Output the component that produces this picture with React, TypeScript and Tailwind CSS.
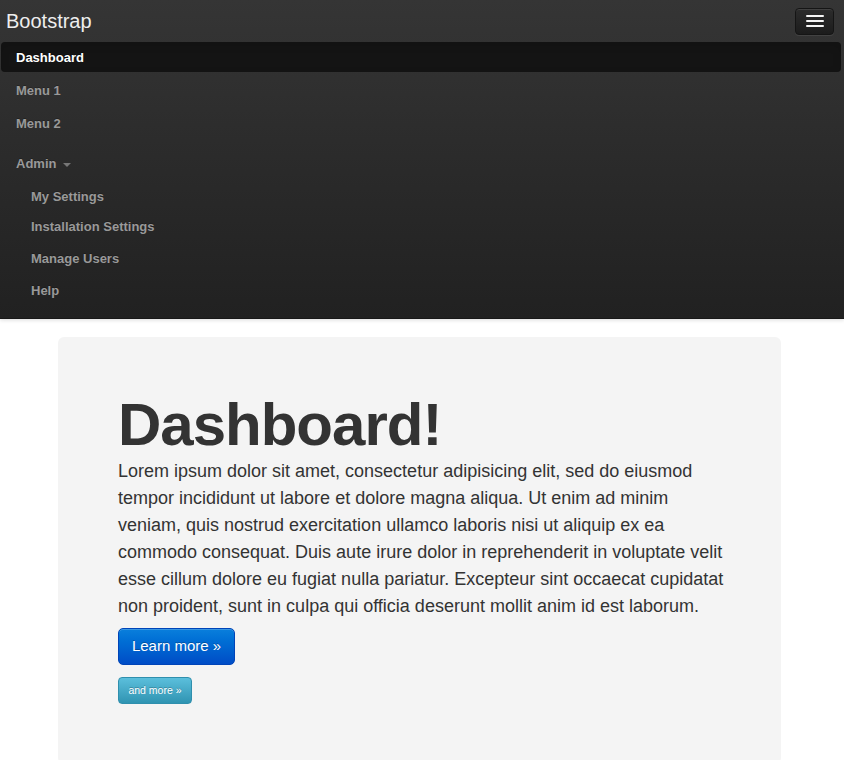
import React from "react";

const font = { fontFamily: '"Liberation Sans", Arial, sans-serif' };

function NavItem({ label, active, sub, className = "" }: { label: string; active?: boolean; sub?: boolean; className?: string }) {
  return (
    <div
      className={
        "h-[30px] flex items-center pt-[2px] text-[13px] font-bold [text-shadow:0_-1px_0_rgba(0,0,0,0.25)] " +
        (active
          ? "ml-[1px] mr-[3px] pl-[15px] rounded-[4px] bg-[#141414] text-white shadow-[inset_0_3px_8px_rgba(0,0,0,0.125)] "
          : sub
          ? "pl-[31px] text-[#999999] "
          : "pl-[16px] text-[#999999] ") +
        className
      }
    >
      {label}
    </div>
  );
}

export default function App() {
  return (
    <div className="min-h-[760px] bg-white" style={font}>
      <div className="bg-gradient-to-b from-[#353535] to-[#212121] border-b border-[#181818] shadow-[0_1px_4px_rgba(0,0,0,0.15)] pb-[13px]">
        <div className="h-[42px] flex items-center justify-between pl-[6px] pr-[10px]">
          <span className="text-[20px] text-[#eeeeee] leading-none">Bootstrap</span>
          <button className="w-[39px] h-[27px] rounded-[4px] bg-gradient-to-b from-[#2c2c2c] to-[#1c1c1c] border border-[#151515] shadow-[inset_0_1px_0_rgba(255,255,255,0.1),0_1px_0_rgba(255,255,255,0.075)] flex flex-col items-center justify-center gap-[3px]">
            <span className="block w-[18px] h-[2px] bg-[#f5f5f5] rounded-[1px]" />
            <span className="block w-[18px] h-[2px] bg-[#f5f5f5] rounded-[1px]" />
            <span className="block w-[18px] h-[2px] bg-[#f5f5f5] rounded-[1px]" />
          </button>
        </div>
        <NavItem label="Dashboard" active />
        <NavItem label="Menu 1" className="mt-[3px]" />
        <NavItem label="Menu 2" className="mt-[3px]" />
        <div className="mt-[10px] h-[30px] flex items-center pt-[2px] pl-[16px] text-[13px] font-bold text-[#999999] [text-shadow:0_-1px_0_rgba(0,0,0,0.25)]">
          Admin
          <span className="ml-[7px] mt-[1px] inline-block w-0 h-0 border-l-[4px] border-r-[4px] border-t-[4px] border-l-transparent border-r-transparent border-t-[#777777]" />
        </div>
        <NavItem label="My Settings" sub className="mt-[3px]" />
        <NavItem label="Installation Settings" sub />
        <NavItem label="Manage Users" sub className="mt-[2px]" />
        <NavItem label="Help" sub className="mt-[2px]" />
      </div>

      <div className="mt-[18px] ml-[58px] w-[723px] rounded-[6px] bg-[#f4f4f4] pt-[58px] pl-[60px] pr-[48px] pb-[60px] text-[#333333]">
        <h1 className="text-[60px] font-bold leading-none tracking-[-1px]">Dashboard!</h1>
        <p className="mt-[3px] text-[18px] leading-[27px]">
          Lorem ipsum dolor sit amet, consectetur adipisicing elit, sed do eiusmod tempor incididunt ut labore et dolore magna aliqua. Ut enim ad minim veniam, quis nostrud exercitation ullamco laboris nisi ut aliquip ex ea commodo consequat. Duis aute irure dolor in reprehenderit in voluptate velit esse cillum dolore eu fugiat nulla pariatur. Excepteur sint occaecat cupidatat non proident, sunt in culpa qui officia deserunt mollit anim id est laborum.
        </p>
        <div className="mt-[8px]">
          <button className="h-[37px] w-[117px] rounded-[5px] border border-[#0044b8] bg-gradient-to-b from-[#0a7fdc] to-[#004cc6] text-white text-[15px] [text-shadow:0_-1px_0_rgba(0,0,0,0.25)] shadow-[inset_0_1px_0_rgba(255,255,255,0.2)]">
            Learn more »
          </button>
        </div>
        <div className="mt-[12px]">
          <button className="h-[27px] w-[74px] rounded-[4px] border border-[#2f8fad] bg-gradient-to-b from-[#5bbfdc] to-[#2f94b2] text-white text-[10.5px] [text-shadow:0_-1px_0_rgba(0,0,0,0.25)]">
            and more »
          </button>
        </div>
      </div>
    </div>
  );
}
